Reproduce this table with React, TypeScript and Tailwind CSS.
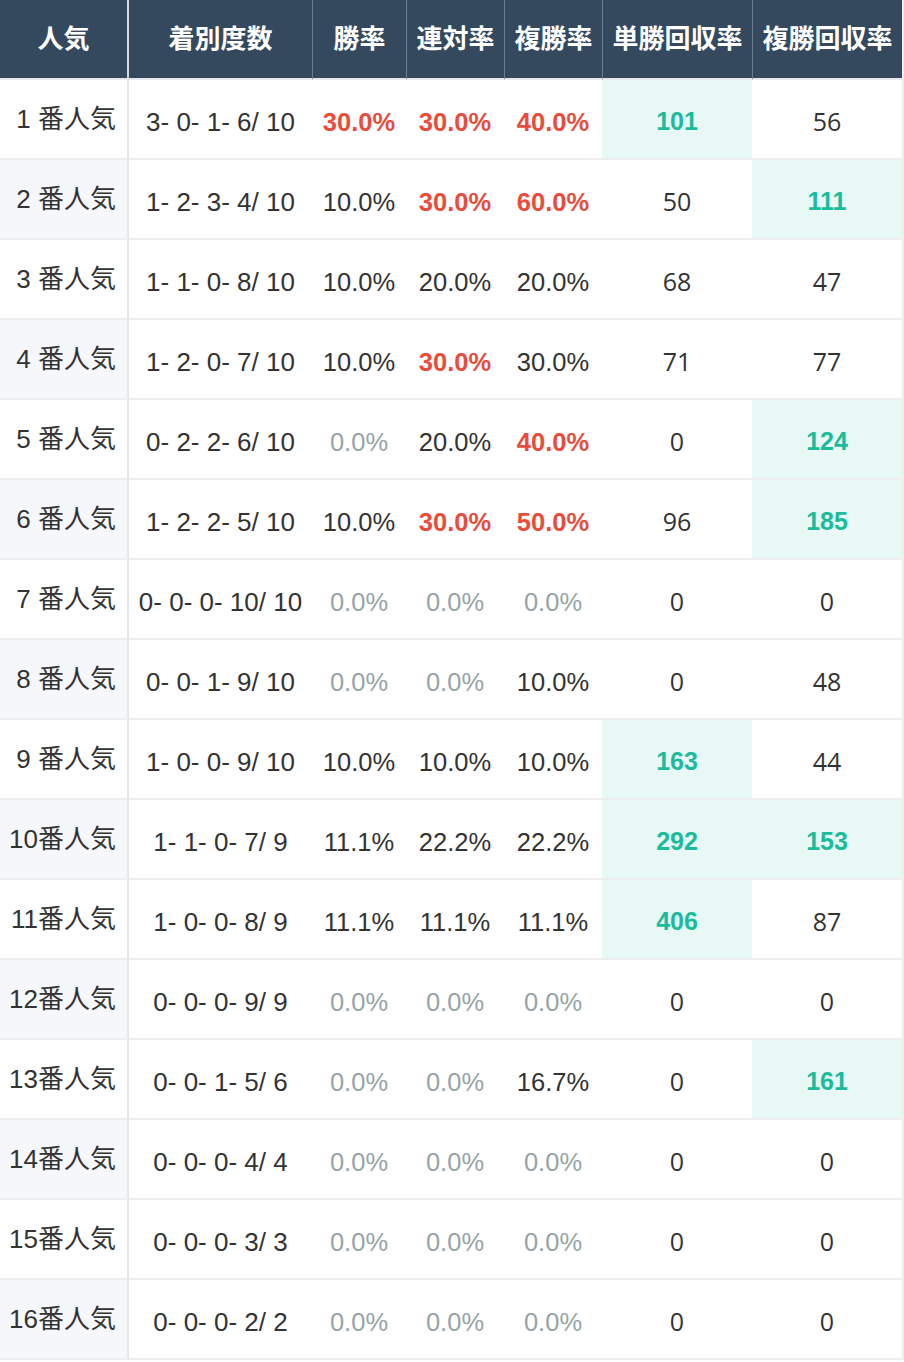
import React from "react";

type Tone = "red" | "gray" | "plain";

type Row = {
  label: string;
  record: string;
  rates: [string, Tone][];
  win: [string, boolean];
  place: [string, boolean];
};

const r = (v: string): [string, Tone] => [v, "red"];
const g = (v: string): [string, Tone] => [v, "gray"];
const p = (v: string): [string, Tone] => [v, "plain"];

const rows: Row[] = [
  { label: "1 番人気", record: "3- 0- 1- 6/ 10", rates: [r("30.0%"), r("30.0%"), r("40.0%")], win: ["101", true], place: ["56", false] },
  { label: "2 番人気", record: "1- 2- 3- 4/ 10", rates: [p("10.0%"), r("30.0%"), r("60.0%")], win: ["50", false], place: ["111", true] },
  { label: "3 番人気", record: "1- 1- 0- 8/ 10", rates: [p("10.0%"), p("20.0%"), p("20.0%")], win: ["68", false], place: ["47", false] },
  { label: "4 番人気", record: "1- 2- 0- 7/ 10", rates: [p("10.0%"), r("30.0%"), p("30.0%")], win: ["71", false], place: ["77", false] },
  { label: "5 番人気", record: "0- 2- 2- 6/ 10", rates: [g("0.0%"), p("20.0%"), r("40.0%")], win: ["0", false], place: ["124", true] },
  { label: "6 番人気", record: "1- 2- 2- 5/ 10", rates: [p("10.0%"), r("30.0%"), r("50.0%")], win: ["96", false], place: ["185", true] },
  { label: "7 番人気", record: "0- 0- 0- 10/ 10", rates: [g("0.0%"), g("0.0%"), g("0.0%")], win: ["0", false], place: ["0", false] },
  { label: "8 番人気", record: "0- 0- 1- 9/ 10", rates: [g("0.0%"), g("0.0%"), p("10.0%")], win: ["0", false], place: ["48", false] },
  { label: "9 番人気", record: "1- 0- 0- 9/ 10", rates: [p("10.0%"), p("10.0%"), p("10.0%")], win: ["163", true], place: ["44", false] },
  { label: "10番人気", record: "1- 1- 0- 7/ 9", rates: [p("11.1%"), p("22.2%"), p("22.2%")], win: ["292", true], place: ["153", true] },
  { label: "11番人気", record: "1- 0- 0- 8/ 9", rates: [p("11.1%"), p("11.1%"), p("11.1%")], win: ["406", true], place: ["87", false] },
  { label: "12番人気", record: "0- 0- 0- 9/ 9", rates: [g("0.0%"), g("0.0%"), g("0.0%")], win: ["0", false], place: ["0", false] },
  { label: "13番人気", record: "0- 0- 1- 5/ 6", rates: [g("0.0%"), g("0.0%"), p("16.7%")], win: ["0", false], place: ["161", true] },
  { label: "14番人気", record: "0- 0- 0- 4/ 4", rates: [g("0.0%"), g("0.0%"), g("0.0%")], win: ["0", false], place: ["0", false] },
  { label: "15番人気", record: "0- 0- 0- 3/ 3", rates: [g("0.0%"), g("0.0%"), g("0.0%")], win: ["0", false], place: ["0", false] },
  { label: "16番人気", record: "0- 0- 0- 2/ 2", rates: [g("0.0%"), g("0.0%"), g("0.0%")], win: ["0", false], place: ["0", false] },
];

const headers = ["着別度数", "勝率", "連対率", "複勝率", "単勝回収率", "複勝回収率"];

const toneClass: Record<Tone, string> = {
  red: "text-[#e74c3c] font-bold",
  gray: "text-[#95a5a6]",
  plain: "text-[#333]",
};

const ReturnCell = ({ value, hit }: { value: string; hit: boolean }) =>
  hit ? (
    <div className="h-[80px] pt-[6px] border-b-2 border-[#eeeeee] bg-[#e8f8f5] flex items-center justify-center font-bold text-[#1abc9c] font-['Liberation_Sans',sans-serif]">
      {value}
    </div>
  ) : (
    <div className="h-[80px] pt-[6px] border-b-2 border-[#eeeeee] bg-white flex items-center justify-center text-[#333] font-['Open_Sans',sans-serif]">
      {value}
    </div>
  );

export default function App() {
  return (
    <div className="w-[904px] bg-white font-['Liberation_Sans','Noto_Sans_CJK_JP',sans-serif] text-[25px] text-[#333]">
      <div className="grid grid-cols-[129px_183px_94px_98px_98px_150px_150px] border-r-2 border-[#eeeeee]">
        {/* header */}
        <div className="h-[80px] border-b-2 border-r-2 border-b-[#e6e8eb] border-r-[#d5d9de] bg-[#34495e] flex items-center justify-center font-bold text-white text-[26px]">
          人気
        </div>
        {headers.map((h, i) => (
          <div
            key={h}
            className={
              "h-[80px] border-b-2 border-[#e6e8eb] bg-[#34495e] flex items-center justify-center font-bold text-white whitespace-nowrap text-[26px] " +
              (i === 0 ? "" : "border-l border-l-[#6c7d8e]")
            }
          >
            {h}
          </div>
        ))}

        {/* body */}
        {rows.map((row, idx) => (
          <React.Fragment key={row.label}>
            <div
              className={
                "h-[80px] border-b-2 border-r-2 border-b-[#eeeeee] border-r-[#e3e6ea] flex items-center justify-end pr-[11px] whitespace-nowrap text-[26px] " +
                (idx % 2 === 1 ? "bg-[#f5f7fa]" : "bg-white")
              }
            >
              {row.label}
            </div>
            <div className="h-[80px] pt-[6px] border-b-2 border-[#eeeeee] flex items-center justify-center whitespace-nowrap text-[26px]">
              {row.record}
            </div>
            {row.rates.map(([v, tone], j) => (
              <div
                key={j}
                className={"h-[80px] pt-[6px] border-b-2 border-[#eeeeee] flex items-center justify-center whitespace-nowrap text-[25.5px] " + toneClass[tone]}
              >
                {v}
              </div>
            ))}
            <ReturnCell value={row.win[0]} hit={row.win[1]} />
            <ReturnCell value={row.place[0]} hit={row.place[1]} />
          </React.Fragment>
        ))}
      </div>
    </div>
  );
}
